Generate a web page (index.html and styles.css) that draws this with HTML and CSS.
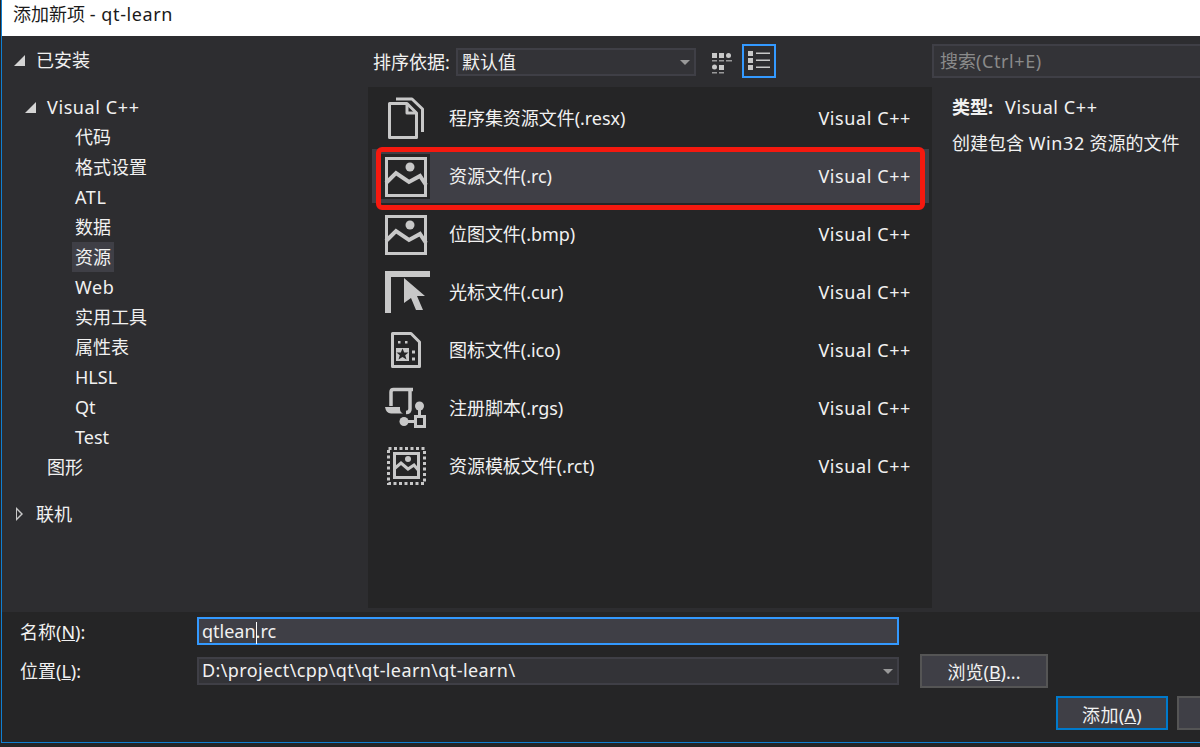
FILE: index.html
```html
<!DOCTYPE html>
<html lang="zh">
<head>
    <meta charset="UTF-8">
    <title>添加新项 - qt-learn</title>
    <link rel="stylesheet" href="styles.css">
</head>
<body>
    <div class="dialog">
        <div class="titlebar">添加新项 <span class="wide">- qt-learn</span></div>

        <div class="main">
            <div class="tree">
                <div class="tree-row top"><i class="arrow open"></i>已安装</div>
                <div class="tree-row group first"><i class="arrow open"></i><span class="wide">Visual C++</span></div>
                <div class="tree-row child">代码</div>
                <div class="tree-row child">格式设置</div>
                <div class="tree-row child"><span class="wide">ATL</span></div>
                <div class="tree-row child">数据</div>
                <div class="tree-row child"><span class="picked">资源</span></div>
                <div class="tree-row child"><span class="wide">Web</span></div>
                <div class="tree-row child">实用工具</div>
                <div class="tree-row child">属性表</div>
                <div class="tree-row child">HLSL</div>
                <div class="tree-row child">Qt</div>
                <div class="tree-row child">Test</div>
                <div class="tree-row group">图形</div>
                <div class="tree-row top online"><i class="arrow closed"></i>联机</div>
            </div>

            <div class="center">
                <div class="toolbar">
                    <span class="sort-label">排序依据:</span>
                    <div class="combo sort">默认值<i class="drop"></i></div>
                    <svg class="grid-btn" width="22" height="24" viewBox="0 0 22 24">
                        <g fill="#c8c8c8">
                            <rect x="1" y="0" width="5" height="5"/>
                            <rect x="8" y="0" width="5" height="5"/>
                            <circle cx="17.5" cy="2.5" r="2.5"/>
                            <rect x="1" y="7" width="5" height="1.5" opacity=".7"/>
                            <rect x="8" y="7" width="5" height="1.5" opacity=".7"/>
                            <rect x="15" y="7" width="6" height="1.5" opacity=".7"/>
                            <circle cx="3.5" cy="14" r="2.5"/>
                            <rect x="8" y="12" width="5" height="5"/>
                            <rect x="1" y="19" width="5" height="1.5" opacity=".7"/>
                            <rect x="8" y="19" width="5" height="1.5" opacity=".7"/>
                        </g>
                    </svg>
                    <div class="view-btn">
                        <svg width="24" height="22" viewBox="0 0 24 22">
                            <g fill="#c8c8c8">
                                <rect x="2" y="2" width="5" height="5"/>
                                <rect x="2" y="9" width="5" height="5"/>
                                <rect x="2" y="16" width="5" height="5"/>
                                <rect x="10" y="3.5" width="14" height="1.5"/>
                                <rect x="10" y="10.5" width="14" height="1.5"/>
                                <rect x="10" y="17.5" width="14" height="1.5"/>
                            </g>
                        </svg>
                    </div>
                </div>

                <div class="list">
                    <div class="item">
                        <svg class="item-icon" viewBox="0 0 49 45">
                            <g fill="none" stroke="#c8c8c8" stroke-width="3" stroke-linejoin="round">
                                <path d="M8.5 7.5H26L35.5 17V41.5H8.5Z"/>
                                <path d="M26 7.5V17H35.5"/>
                                <path d="M15 3H31L41.5 13V36"/>
                            </g>
                        </svg>
                        <span class="item-name">程序集资源文件(.resx)</span>
                        <span class="item-type">Visual C++</span>
                    </div>
                    <div class="item selected">
                        <svg class="item-icon" viewBox="0 0 49 45">
                            <rect x="5.5" y="4.5" width="39" height="37" fill="none" stroke="#c8c8c8" stroke-width="3"/>
                            <path d="M5 29L15 19L28 28L39 22L45 31" fill="none" stroke="#c8c8c8" stroke-width="4"/>
                            <circle cx="29" cy="13" r="4.5" fill="#c8c8c8"/>
                        </svg>
                        <span class="item-name">资源文件(.rc)</span>
                        <span class="item-type">Visual C++</span>
                        <div class="mark"></div>
                    </div>
                    <div class="item">
                        <svg class="item-icon" viewBox="0 0 49 45">
                            <rect x="5.5" y="4.5" width="39" height="37" fill="none" stroke="#c8c8c8" stroke-width="3"/>
                            <path d="M5 29L15 19L28 28L39 22L45 31" fill="none" stroke="#c8c8c8" stroke-width="4"/>
                            <circle cx="29" cy="13" r="4.5" fill="#c8c8c8"/>
                        </svg>
                        <span class="item-name">位图文件(.bmp)</span>
                        <span class="item-type">Visual C++</span>
                    </div>
                    <div class="item">
                        <svg class="item-icon" viewBox="0 0 49 45">
                            <path d="M4 1H49V7H10V43H4Z" fill="#c8c8c8"/>
                            <path d="M23 8L44 26H36L42 40H35L30 28L23 33Z" fill="#c8c8c8"/>
                        </svg>
                        <span class="item-name">光标文件(.cur)</span>
                        <span class="item-type">Visual C++</span>
                    </div>
                    <div class="item">
                        <svg class="item-icon" viewBox="0 0 49 45">
                            <path d="M11.5 5.5H30L38.5 14V38.5H11.5Z" fill="none" stroke="#c8c8c8" stroke-width="3" stroke-linejoin="round"/>
                            <g fill="#c8c8c8">
                                <rect x="17" y="13" width="2.500" height="2.500"/>
                                <rect x="24" y="13" width="2.500" height="2.500"/>
                                <rect x="15" y="20" width="13" height="13"/>
                                <rect x="31" y="22.500" width="3" height="3"/>
                                <rect x="31" y="29.500" width="3" height="3"/>
                            </g>
                            <path d="M21.500 20.500L23.200 24.500H27.500L24.200 27.200L25.500 31.500L21.500 29L17.500 31.500L18.800 27.200L15.500 24.500H19.800Z" fill="#252526"/>
                        </svg>
                        <span class="item-name">图标文件(.ico)</span>
                        <span class="item-type">Visual C++</span>
                    </div>
                    <div class="item">
                        <svg class="item-icon" viewBox="0 0 49 45">
                            <g fill="none" stroke="#c8c8c8" stroke-width="3.500">
                                <path d="M10 20V6Q10 3.500 12.500 3.500H32"/>
                                <path d="M29 4V23Q29 26.500 25 26.500"/>
                            </g>
                            <path d="M4 21H19V23Q19 26 22 27.500H10Q5 27 4 21Z" fill="#c8c8c8"/>
                            <g fill="none" stroke="#c8c8c8" stroke-width="3">
                                <rect x="34.500" y="30.500" width="9" height="10"/>
                                <path d="M24 35.500H34"/>
                                <path d="M38.500 22V30"/>
                            </g>
                            <circle cx="38.500" cy="20" r="4.500" fill="#c8c8c8"/>
                            <circle cx="23" cy="35.500" r="4.500" fill="#c8c8c8"/>
                        </svg>
                        <span class="item-name">注册脚本(.rgs)</span>
                        <span class="item-type">Visual C++</span>
                    </div>
                    <div class="item">
                        <svg class="item-icon" viewBox="0 0 49 45">
                            <rect x="7.500" y="4.500" width="36" height="35" fill="none" stroke="#c8c8c8" stroke-width="3" stroke-dasharray="3 2.500"/>
                            <rect x="13.500" y="9.500" width="24" height="24" fill="none" stroke="#c8c8c8" stroke-width="3"/>
                            <path d="M13 25L20 19L27 25L33 21L38 27" fill="none" stroke="#c8c8c8" stroke-width="3"/>
                            <circle cx="27" cy="15" r="3" fill="#c8c8c8"/>
                        </svg>
                        <span class="item-name">资源模板文件(.rct)</span>
                        <span class="item-type">Visual C++</span>
                    </div>
                </div>
            </div>

            <div class="side">
                <div class="search">搜索<span class="wide">(Ctrl+E)</span></div>
                <div class="info-line"><b>类型:</b><span class="wide type-value">Visual C++</span></div>
                <div class="info-line">创建包含 <span class="wide">Win32</span> 资源的文件</div>
            </div>
        </div>

        <div class="bottom">
            <div class="field name-field">
                <label>名称(<u>N</u>):</label>
                <div class="textbox">qtlean<span class="cursor"></span>.rc</div>
            </div>
            <div class="field place-field">
                <label class="place-label">位置(<u>L</u>):</label>
                <div class="combo path"><span class="path-text">D:\project\cpp\qt\qt-learn\qt-learn\</span><i class="drop"></i></div>
                <button class="btn browse">浏览(<u>B</u>)...</button>
            </div>
            <div class="actions">
                <button class="btn primary">添加(<u>A</u>)</button>
                <button class="btn cancel"></button>
            </div>
        </div>
    </div>
</body>
</html>
```

FILE: styles.css
```css
html, body {
    margin: 0;
    height: 100%;
    overflow: hidden;
}
body {
    background: #252526;
    color: #f1f1f1;
    font-family: "Noto Sans", "Noto Sans CJK SC", sans-serif;
    font-size: 18px;
}
.wide {
    letter-spacing: .6px;
}
.dialog {
    width: 1199px;
    height: 743px;
    margin-left: 1px;
    box-sizing: border-box;
    border-left: 1px solid #0f7fd2;
    border-bottom: 1px solid #0f7fd2;
    background: #2d2d30;
    display: flex;
    flex-direction: column;
    overflow: hidden;
}
.titlebar {
    flex: 0 0 36px;
    background: #fff;
    color: #1a1a1a;
    padding-left: 11px;
    line-height: 28px;
}
.main {
    flex: 0 0 576px;
    display: flex;
}

/* left tree */
.tree {
    width: 366px;
    padding-top: 9px;
}
.tree-row {
    height: 30px;
    line-height: 30px;
    position: relative;
    white-space: nowrap;
}
.tree-row.top {
    padding-left: 34px;
}
.tree-row.group {
    padding-left: 45px;
}
.tree-row.first {
    margin-top: 17px;
}
.tree-row.child {
    padding-left: 73px;
}
.tree-row.online {
    margin-top: 17px;
}
.picked {
    display: inline-block;
    background: #3f3f46;
    padding: 0 3px;
    margin-left: -3px;
}
.arrow {
    position: absolute;
    top: 10px;
    width: 0;
    height: 0;
}
.top .arrow.open {
    left: 12px;
}
.group .arrow.open {
    left: 23px;
}
.arrow.open {
    border-style: solid;
    border-width: 0 0 11px 11px;
    border-color: transparent transparent #d4d4d4 transparent;
}
.arrow.closed {
    left: 14px;
    top: 8px;
    border-style: solid;
    border-width: 7px 0 7px 7px;
    border-color: transparent transparent transparent #c8c8c8;
}
.arrow.closed::after {
    content: "";
    position: absolute;
    left: -6px;
    top: -4px;
    border-style: solid;
    border-width: 4px 0 4px 4px;
    border-color: transparent transparent transparent #2d2d30;
}

/* middle column */
.center {
    width: 564px;
}
.toolbar {
    height: 51px;
    display: flex;
    align-items: center;
    padding-left: 5px;
    box-sizing: border-box;
}
.sort-label {
    width: 83px;
    margin-top: -1px;
}
.combo {
    position: relative;
    box-sizing: border-box;
    height: 28px;
    line-height: 24px;
    padding-left: 4px;
    border: 2px solid #3f3f46;
    background: #333337;
    white-space: nowrap;
}
.combo.sort {
    width: 240px;
    margin-top: 1px;
}
.drop {
    position: absolute;
    right: 4px;
    top: 10px;
    border-style: solid;
    border-width: 5px 5px 0 5px;
    border-color: #999 transparent transparent transparent;
}
.grid-btn {
    margin-left: 15px;
    margin-top: 6px;
}
.view-btn {
    box-sizing: border-box;
    width: 34px;
    height: 34px;
    margin-left: 9px;
    margin-top: -2px;
    border: 2px solid #3399ff;
    padding: 3px 0 0 2px;
}
.view-btn svg {
    display: block;
}
.list {
    height: 521px;
    box-sizing: border-box;
    background: #252526;
    padding: 4px 3px 0 4px;
    display: flex;
    flex-direction: column;
    gap: 4px;
}
.item {
    position: relative;
    height: 54px;
    line-height: 54px;
    display: flex;
    padding-left: 9px;
    padding-right: 18px;
}
.item-icon {
    width: 49px;
    height: 45px;
    margin-top: 5px;
    flex-shrink: 0;
}
.item-name {
    margin-left: 19px;
    flex: 1;
    letter-spacing: -.05px;
}
.item-type {
    letter-spacing: .6px;
}
.item.selected {
    background: #3f3f46;
}
.item.selected .item-icon {
    background: #252526;
}
.mark {
    position: absolute;
    left: 4px;
    top: -2px;
    width: 549px;
    height: 63px;
    box-sizing: border-box;
    border: 5px solid #f5190f;
    border-radius: 6px;
}

/* right column */
.side {
    flex: 1;
}
.search {
    box-sizing: border-box;
    height: 34px;
    margin-top: 8px;
    margin-bottom: 12px;
    border: 2px solid #3f3f46;
    border-right: 0;
    background: #333337;
    color: #8a8a8a;
    line-height: 31px;
    padding-left: 6px;
}
.info-line {
    height: 35px;
    line-height: 35px;
    padding-left: 20px;
    white-space: nowrap;
}
.info-line + .info-line {
    line-height: 37px;
}
.info-line b {
    font-weight: 700;
}
.type-value {
    margin-left: 12px;
}

/* bottom form */
.bottom {
    flex: 1;
    background: #252526;
    padding-top: 5px;
    margin-left: 0;
}
.field {
    display: flex;
    align-items: center;
    position: relative;
}
.field label {
    width: 195px;
    padding-left: 18px;
    box-sizing: border-box;
}
.field .place-label {
    padding-bottom: 2px;
}
.textbox {
    box-sizing: border-box;
    width: 702px;
    height: 28px;
    line-height: 24px;
    padding-left: 3px;
    border: 2px solid #3399ff;
    background: #3f3f46;
}
.cursor {
    display: inline-block;
    width: 1px;
    height: 22px;
    margin-right: -1px;
    background: #fff;
    vertical-align: middle;
}
.place-field {
    margin-top: 9px;
}
.combo.path {
    width: 702px;
    padding-left: 3px;
    line-height: 22px;
}
.path-text {
    letter-spacing: .4px;
}
.btn {
    box-sizing: border-box;
    height: 34px;
    border: 2px solid #555;
    background: #3f3f46;
    color: #f1f1f1;
    font: inherit;
    padding: 0;
}
.browse {
    width: 128px;
    margin-left: 21px;
}
.actions {
    display: flex;
    padding-left: 1054px;
    margin-top: 8px;
}
.primary {
    flex: 0 0 112px;
    border-color: #007acc;
    padding-top: 2px;
    letter-spacing: .3px;
}
.cancel {
    flex: 0 0 112px;
    margin-left: 9px;
}
```
